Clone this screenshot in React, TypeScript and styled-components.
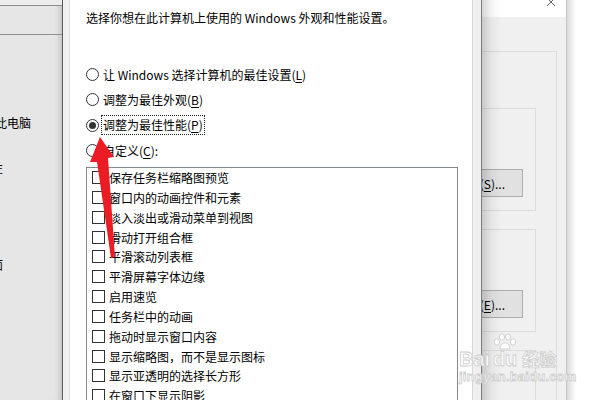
import React from "react";
import styled, { createGlobalStyle } from "styled-components";

const GlobalStyle = createGlobalStyle`
  *, *::before, *::after { box-sizing: border-box; }
  html, body { margin: 0; padding: 0; background: #fff; }
  body {
    font-family: "Noto Sans CJK SC", "Noto Sans", sans-serif;
    font-size: 12px;
    color: #000;
  }
`;

const Screen = styled.div`
  position: relative;
  display: flex;
  width: 600px;
  height: 400px;
  overflow: hidden;
  background: #fff;
`;

/* explorer navigation pane on the left */
const NavPane = styled.div`
  display: flex;
  flex-direction: column;
  width: 63px;
  background: #e6e6e6;
  border-right: 1px solid #5c5c5c;
  box-shadow: inset -7px 0 6px -5px rgba(0, 0, 0, 0.18);
`;

const NavTop = styled.div`
  height: 6px;
  background: #ececec;
  border-bottom: 1px solid #8e8e8e;
`;

const NavBar = styled.div`
  height: 29px;
  border-bottom: 1px solid #8e8e8e;
`;

const NavItem = styled.div<{ $gap: number; $shift: number }>`
  height: 17px;
  line-height: 17px;
  white-space: nowrap;
  margin-top: ${({ $gap }) => $gap}px;
  margin-left: ${({ $shift }) => $shift}px;
`;

const Gutter = styled.div`
  width: 7px;
  background: #f0f0f0;
  border-right: 1px solid #e2e2e2;
`;

/* performance options dialog */
const Dialog = styled.section`
  display: flex;
  flex-direction: column;
  width: 402px;
  background: #fff;
  padding: 9px 14px 0 16px;
`;

const Intro = styled.p`
  margin: 0;
  line-height: 17px;
  white-space: nowrap;
`;

const RadioList = styled.div`
  display: flex;
  flex-direction: column;
  margin-top: 36px;
`;

const RadioRow = styled.label`
  display: flex;
  align-items: center;
  height: 25.33px;
  white-space: nowrap;
`;

const RadioCircle = styled.span<{ $checked?: boolean }>`
  display: grid;
  place-items: center;
  width: 13px;
  height: 13px;
  border: 1px solid #333;
  border-radius: 50%;
  background: #fff;

  &::after {
    content: "";
    width: 7px;
    height: 7px;
    border-radius: 50%;
    background: ${({ $checked }) => ($checked ? "#333" : "transparent")};
  }
`;

const RadioText = styled.span<{ $focused?: boolean }>`
  margin-left: 2px;
  padding: 0 1px;
  line-height: 18px;
  border: 1px dotted ${({ $focused }) => ($focused ? "#222" : "transparent")};
`;

const ListBox = styled.div`
  flex: 1;
  margin-top: 3.3px;
  padding: 0 0 0 5px;
  border: 1px solid #828790;
  display: flex;
  flex-direction: column;
`;

const CheckRow = styled.div`
  display: flex;
  align-items: center;
  height: 19.85px;
  flex-shrink: 0;
  white-space: nowrap;
`;

const CheckBox = styled.span`
  width: 13px;
  height: 13px;
  border: 1px solid #333;
  background: #fff;
  flex-shrink: 0;
`;

const CheckLabel = styled.span`
  margin-left: 4px;
  line-height: 17px;
`;

const DialogFrame = styled.div`
  width: 10px;
  background: #f0f0f0;
  border-left: 1px solid #d8d8d8;
  border-right: 1px solid #7c7c7c;
`;

/* system properties window behind */
const BackWindow = styled.div`
  position: relative;
  display: flex;
  flex-direction: column;
  width: 85px;
  background: #f0f0f0;
  overflow: hidden;
  border-right: 1px solid #c4c4c4;

  &::after {
    content: "";
    position: absolute;
    inset: 0;
    background: linear-gradient(to right, rgba(0, 0, 0, 0.16), rgba(0, 0, 0, 0.04) 10px, rgba(0, 0, 0, 0) 20px);
    pointer-events: none;
  }
`;

const TitleBar = styled.div`
  display: flex;
  justify-content: flex-end;
  height: 17px;
  padding-right: 10px;
  background: #fff;
  flex-shrink: 0;
`;

const CloseIcon = styled.svg`
  margin-top: -3px;
`;

const GroupBox = styled.div`
  flex: 1;
  margin: 34px 9px 0 -40px;
  padding: 56px 20px 0 0;
  border: 1px solid #dcdcdc;
  border-bottom: none;
`;

const InnerBox = styled.div`
  display: flex;
  justify-content: flex-end;
  align-items: flex-start;
  height: 103px;
  margin-bottom: 18px;
  padding: 60px 12px 0 0;
  border: 1px solid #dcdcdc;
`;

const PushButton = styled.button`
  display: flex;
  align-items: center;
  justify-content: flex-end;
  width: 80px;
  height: 28px;
  padding: 0 17px 0 0;
  background: #e1e1e1;
  border: 1px solid #adadad;
  font: inherit;
  color: #000;
`;

const Desktop = styled.div`
  flex: 1;
  background: linear-gradient(to right, rgba(0, 0, 0, 0.14), rgba(0, 0, 0, 0) 9px), #fff;
`;

/* overlays */
const ArrowLayer = styled.svg`
  position: absolute;
  left: 0;
  top: 0;
  pointer-events: none;
`;

const Watermark = styled.div`
  position: absolute;
  left: 459px;
  top: 333px;
  width: 110px;
  pointer-events: none;
  color: rgba(255, 255, 255, 0.85);
  -webkit-text-stroke: 0.8px #cdcdcd;
`;

const MarkTop = styled.div`
  display: flex;
  align-items: flex-end;
  height: 36px;
`;

const MarkWord = styled.span<{ $size: number }>`
  font-family: "Liberation Sans", Arial, sans-serif;
  font-weight: 700;
  font-size: ${({ $size }) => $size}px;
  line-height: 20px;
`;

const MarkDu = styled.span`
  position: relative;
  display: flex;
  flex-direction: column;
  align-items: center;
  margin: 0 4px 0 2px;
`;

const MarkCn = styled.span`
  font-size: 17px;
  font-weight: 700;
  line-height: 20px;
`;

const MarkUrl = styled.div`
  font-family: "Liberation Sans", Arial, sans-serif;
  font-weight: 700;
  font-size: 13px;
  letter-spacing: 0.2px;
  line-height: 15px;
`;

const Mn = styled.u`
  text-underline-offset: 2px;
`;

const radios = [
  { text: "让 Windows 选择计算机的最佳设置", key: "L" },
  { text: "调整为最佳外观", key: "B" },
  { text: "调整为最佳性能", key: "P", checked: true },
  { text: "自定义", key: "C", tail: ":" },
];

const effects = [
  "保存任务栏缩略图预览",
  "窗口内的动画控件和元素",
  "淡入淡出或滑动菜单到视图",
  "滑动打开组合框",
  "平滑滚动列表框",
  "平滑屏幕字体边缘",
  "启用速览",
  "任务栏中的动画",
  "拖动时显示窗口内容",
  "显示缩略图，而不是显示图标",
  "显示亚透明的选择长方形",
  "在窗口下显示阴影",
  "在单击后淡出菜单",
];

const Paw = () => (
  <svg width="26" height="18" viewBox="0 0 26 18" style={{ marginBottom: -2 }}>
    <g fill="rgba(255,255,255,0.85)" stroke="#cdcdcd" strokeWidth="0.9">
      <ellipse cx="5" cy="9" rx="2.6" ry="3.2" />
      <ellipse cx="10" cy="4" rx="2.6" ry="3.2" />
      <ellipse cx="16" cy="4" rx="2.6" ry="3.2" />
      <ellipse cx="21" cy="9" rx="2.6" ry="3.2" />
      <path d="M8 16 C8 11 11 10 13 10 C15 10 18 11 18 16 Z" />
    </g>
  </svg>
);

export default function App() {
  return (
    <>
      <GlobalStyle />
      <Screen>
        <NavPane>
          <NavTop />
          <NavBar />
          <NavItem $gap={79} $shift={-5}>此电脑</NavItem>
          <NavItem $gap={28} $shift={-9}>性</NavItem>
          <NavItem $gap={80} $shift={-9}>面</NavItem>
        </NavPane>
        <Gutter />

        <Dialog>
          <Intro>选择你想在此计算机上使用的 Windows 外观和性能设置。</Intro>
          <RadioList>
            {radios.map((r) => (
              <RadioRow key={r.key}>
                <RadioCircle $checked={r.checked} />
                <RadioText $focused={r.checked}>
                  {r.text}(<Mn>{r.key}</Mn>){r.tail}
                </RadioText>
              </RadioRow>
            ))}
          </RadioList>
          <ListBox>
            {effects.map((e) => (
              <CheckRow key={e}>
                <CheckBox />
                <CheckLabel>{e}</CheckLabel>
              </CheckRow>
            ))}
          </ListBox>
        </Dialog>
        <DialogFrame />

        <BackWindow>
          <TitleBar>
            <CloseIcon width="10" height="10" viewBox="0 0 10 10">
              <path d="M1 1 L9 9 M9 1 L1 9" stroke="#666" strokeWidth="1" />
            </CloseIcon>
          </TitleBar>
          <GroupBox>
            <InnerBox>
              <PushButton>
                设置(<Mn>S</Mn>)...
              </PushButton>
            </InnerBox>
            <InnerBox>
              <PushButton>
                设置(<Mn>E</Mn>)...
              </PushButton>
            </InnerBox>
            <InnerBox />
          </GroupBox>
        </BackWindow>
        <Desktop />

        <ArrowLayer width="600" height="400" viewBox="0 0 600 400">
          <polygon
            points="100,137 114,157 108,158 115,257 111,258 97,162 90,162"
            fill="#ec1c24"
          />
        </ArrowLayer>

        <Watermark>
          <MarkTop>
            <MarkWord $size={20}>Bai</MarkWord>
            <MarkDu>
              <Paw />
              <MarkWord $size={20}>du</MarkWord>
            </MarkDu>
            <MarkCn>经验</MarkCn>
          </MarkTop>
          <MarkUrl>jingyan.baidu.com</MarkUrl>
        </Watermark>
      </Screen>
    </>
  );
}
